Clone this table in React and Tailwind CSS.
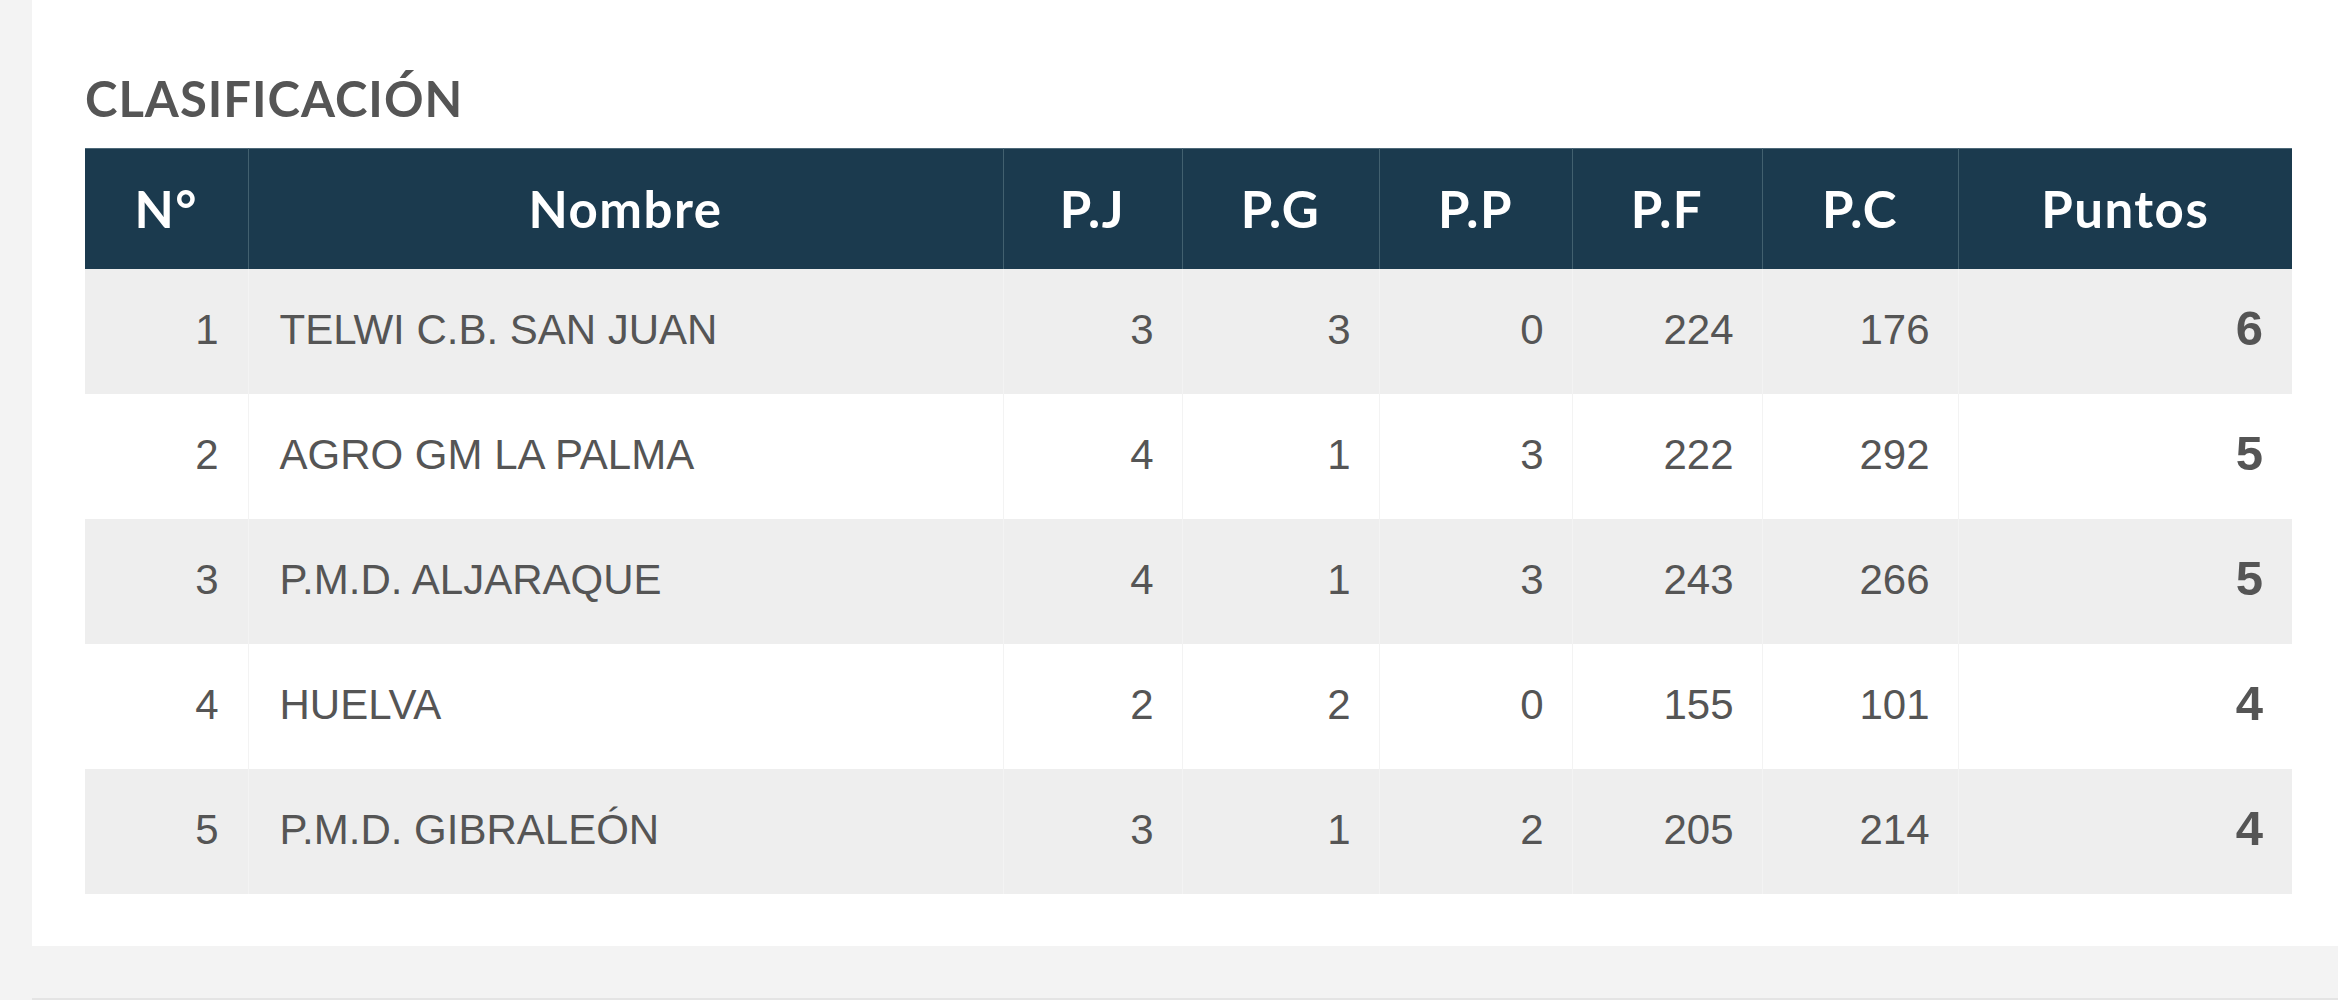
import React from "react";

const rows = [
  { n: 1, name: "TELWI C.B. SAN JUAN", pj: 3, pg: 3, pp: 0, pf: 224, pc: 176, pts: 6 },
  { n: 2, name: "AGRO GM LA PALMA", pj: 4, pg: 1, pp: 3, pf: 222, pc: 292, pts: 5 },
  { n: 3, name: "P.M.D. ALJARAQUE", pj: 4, pg: 1, pp: 3, pf: 243, pc: 266, pts: 5 },
  { n: 4, name: "HUELVA", pj: 2, pg: 2, pp: 0, pf: 155, pc: 101, pts: 4 },
  { n: 5, name: "P.M.D. GIBRALEÓN", pj: 3, pg: 1, pp: 2, pf: 205, pc: 214, pts: 4 },
];

const heads = [
  { t: "N°", w: "w-[163px]" },
  { t: "Nombre", w: "w-[755px]" },
  { t: "P.J", w: "w-[179px]" },
  { t: "P.G", w: "w-[197px]" },
  { t: "P.P", w: "w-[193px]" },
  { t: "P.F", w: "w-[190px]" },
  { t: "P.C", w: "w-[196px]" },
  { t: "Puntos", w: "w-[334px]" },
];

export default function App() {
  return (
    <div className="w-[2338px] h-[1000px] bg-[#f3f3f3] pl-[32px] flex flex-col overflow-hidden">
      <div className="bg-white pt-[74px] pb-[52px] pl-[53px] pr-[46px]">
        <h2 className="h-[49px] leading-none text-[49px] font-bold text-[#555555] font-['Lato',sans-serif] mb-[25px] tracking-[1px]">
          CLASIFICACIÓN
        </h2>
        <table className="table-fixed border-collapse w-[2207px]">
          <thead>
            <tr className="h-[120px] bg-[#1b3a4e] border-t border-t-[#4d6878]">
              {heads.map((h, i) => (
                <th
                  key={h.t}
                  className={`${h.w} p-0 text-center align-middle text-white font-bold text-[51px] font-['Lato',sans-serif] tracking-[1.5px] ${
                    i > 0 ? "border-l border-l-[#42606f]" : ""
                  }`}
                >
                  {h.t}
                </th>
              ))}
            </tr>
          </thead>
          <tbody className="font-['Liberation_Sans',Arial,sans-serif] text-[#555555]">
            {rows.map((r, idx) => (
              <tr key={r.n} className={`h-[125px] ${idx % 2 === 0 ? "bg-[#eeeeee]" : "bg-white"}`}>
                <td className="text-right pr-[29px] pb-[4px] text-[42px] align-middle">{r.n}</td>
                <td className="text-left pl-[31px] pb-[4px] text-[42px] align-middle border-l border-l-[#f3f3f3]">{r.name}</td>
                <td className="text-right pr-[28px] pb-[4px] text-[42px] align-middle border-l border-l-[#f3f3f3]">{r.pj}</td>
                <td className="text-right pr-[28px] pb-[4px] text-[42px] align-middle border-l border-l-[#f3f3f3]">{r.pg}</td>
                <td className="text-right pr-[28px] pb-[4px] text-[42px] align-middle border-l border-l-[#f3f3f3]">{r.pp}</td>
                <td className="text-right pr-[28px] pb-[4px] text-[42px] align-middle border-l border-l-[#f3f3f3]">{r.pf}</td>
                <td className="text-right pr-[28px] pb-[4px] text-[42px] align-middle border-l border-l-[#f3f3f3]">{r.pc}</td>
                <td className="text-right pr-[29px] pb-[4px] text-[49px] font-bold align-middle border-l border-l-[#f3f3f3]">{r.pts}</td>
              </tr>
            ))}
          </tbody>
        </table>
      </div>
      <div className="h-[52px] shrink-0"></div>
      <div className="h-[4px] bg-[#e4e4e4] shrink-0"></div>
    </div>
  );
}
